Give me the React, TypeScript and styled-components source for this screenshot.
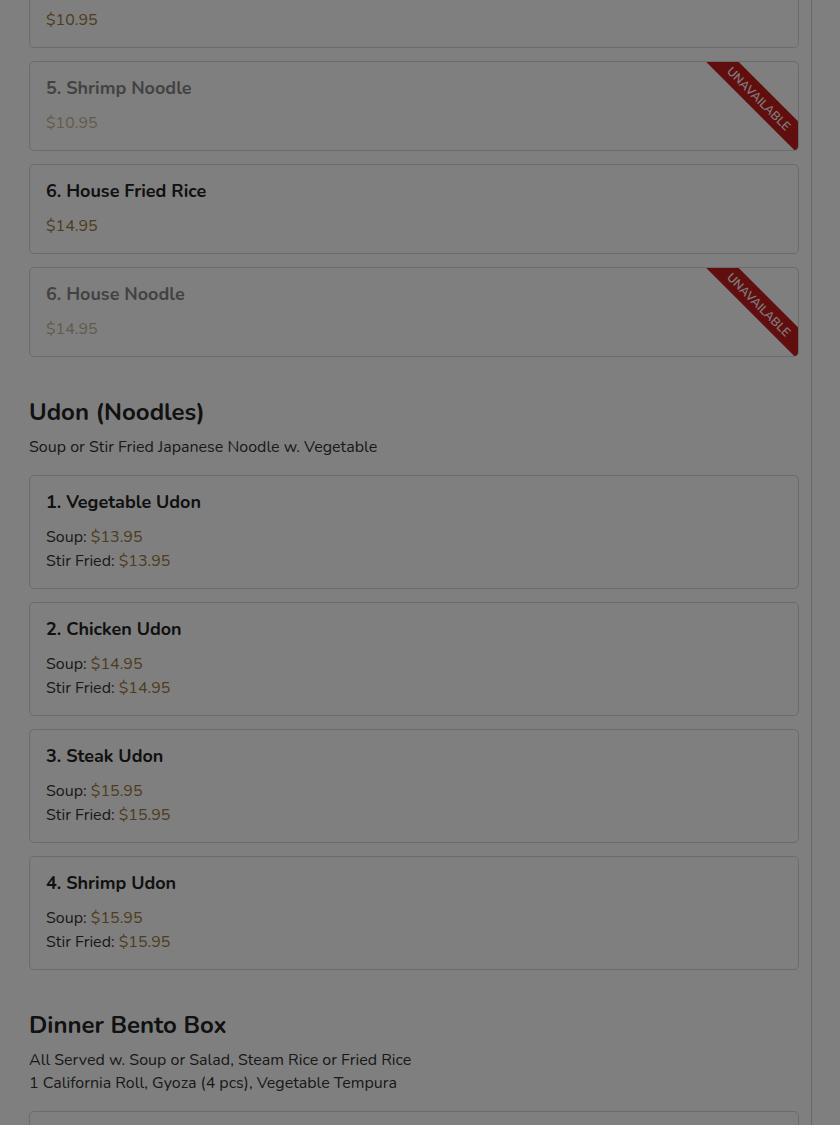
import React from "react";
import styled, { createGlobalStyle } from "styled-components";

const Global = createGlobalStyle`
  html, body { margin: 0; padding: 0; background: #ffffff; }
  body { font-family: Nunito, Lato, "Open Sans", sans-serif; color: #333; overflow: hidden; }
  * { box-sizing: border-box; }
`;

const Page = styled.div`
  width: 812px;
  min-height: 1125px;
  border-right: 1px solid #cfcfcf;
  padding: 0 12px 0 29px;
  margin-top: -42px;
`;

const Section = styled.section`
  display: flex;
  flex-direction: column;
  margin-bottom: 39px;
`;

const Heading = styled.h2`
  margin: 0 0 8px;
  font-size: 24px;
  line-height: 32px;
  font-weight: 700;
  color: #222;
`;

const Sub = styled.div`
  font-size: 16px;
  line-height: 23px;
  color: #333;
`;

const SubBlock = styled.div`
  margin-bottom: 16px;
`;

const List = styled.div`
  display: flex;
  flex-direction: column;
  gap: 13px;
`;

const Card = styled.div`
  position: relative;
  overflow: hidden;
  border: 1px solid #d6d6d6;
  border-radius: 5px;
  background: #fff;
  padding: 14px 16px 15px;
`;

const Body = styled.div<{ $off?: boolean }>`
  opacity: ${(p) => (p.$off ? 0.55 : 1)};
`;

const Title = styled.div`
  font-size: 18px;
  line-height: 24px;
  font-weight: 700;
  color: #222;
  margin-bottom: 11px;
`;

const Line = styled.div`
  font-size: 16px;
  line-height: 24px;
  color: #333;
`;

const Price = styled.span`
  color: #9c7838;
`;

const Ribbon = styled.div`
  position: absolute;
  top: 25px;
  right: -61px;
  width: 200px;
  height: 23px;
  background: #c21d1d;
  transform: rotate(45deg);
  display: flex;
  align-items: center;
  justify-content: center;
  color: #fff;
  font-size: 12px;
  font-weight: 600;
  letter-spacing: 0.1px;
  text-transform: uppercase;
`;

const Overlay = styled.div`
  position: fixed;
  inset: 0;
  background: rgba(0, 0, 0, 0.5);
  pointer-events: none;
`;

type Item = { name: string; prices: { label?: string; value: string }[]; off?: boolean };

const noodles: Item[] = [
  { name: "5. Shrimp Fried Rice", prices: [{ value: "$10.95" }] },
  { name: "5. Shrimp Noodle", prices: [{ value: "$10.95" }], off: true },
  { name: "6. House Fried Rice", prices: [{ value: "$14.95" }] },
  { name: "6. House Noodle", prices: [{ value: "$14.95" }], off: true },
];

const udon: Item[] = [
  { name: "1. Vegetable Udon", prices: [{ label: "Soup", value: "$13.95" }, { label: "Stir Fried", value: "$13.95" }] },
  { name: "2. Chicken Udon", prices: [{ label: "Soup", value: "$14.95" }, { label: "Stir Fried", value: "$14.95" }] },
  { name: "3. Steak Udon", prices: [{ label: "Soup", value: "$15.95" }, { label: "Stir Fried", value: "$15.95" }] },
  { name: "4. Shrimp Udon", prices: [{ label: "Soup", value: "$15.95" }, { label: "Stir Fried", value: "$15.95" }] },
];

const bento: Item[] = [
  { name: "1. Chicken Teriyaki", prices: [{ value: "$18.95" }] },
];

function MenuCard({ item }: { item: Item }) {
  return (
    <Card>
      <Body $off={item.off}>
        <Title>{item.name}</Title>
        {item.prices.map((p, i) => (
          <Line key={i}>
            {p.label ? `${p.label}: ` : ""}
            <Price>{p.value}</Price>
          </Line>
        ))}
      </Body>
      {item.off && <Ribbon>Unavailable</Ribbon>}
    </Card>
  );
}

export default function App() {
  return (
    <>
      <Global />
      <Page>
        <Section>
          <List>
            {noodles.map((it) => (
              <MenuCard key={it.name} item={it} />
            ))}
          </List>
        </Section>
        <Section>
          <Heading>Udon (Noodles)</Heading>
          <SubBlock>
            <Sub>Soup or Stir Fried Japanese Noodle w. Vegetable</Sub>
          </SubBlock>
          <List>
            {udon.map((it) => (
              <MenuCard key={it.name} item={it} />
            ))}
          </List>
        </Section>
        <Section>
          <Heading>Dinner Bento Box</Heading>
          <SubBlock>
            <Sub>All Served w. Soup or Salad, Steam Rice or Fried Rice</Sub>
            <Sub>1 California Roll, Gyoza (4 pcs), Vegetable Tempura</Sub>
          </SubBlock>
          <List>
            {bento.map((it) => (
              <MenuCard key={it.name} item={it} />
            ))}
          </List>
        </Section>
      </Page>
      <Overlay />
    </>
  );
}
